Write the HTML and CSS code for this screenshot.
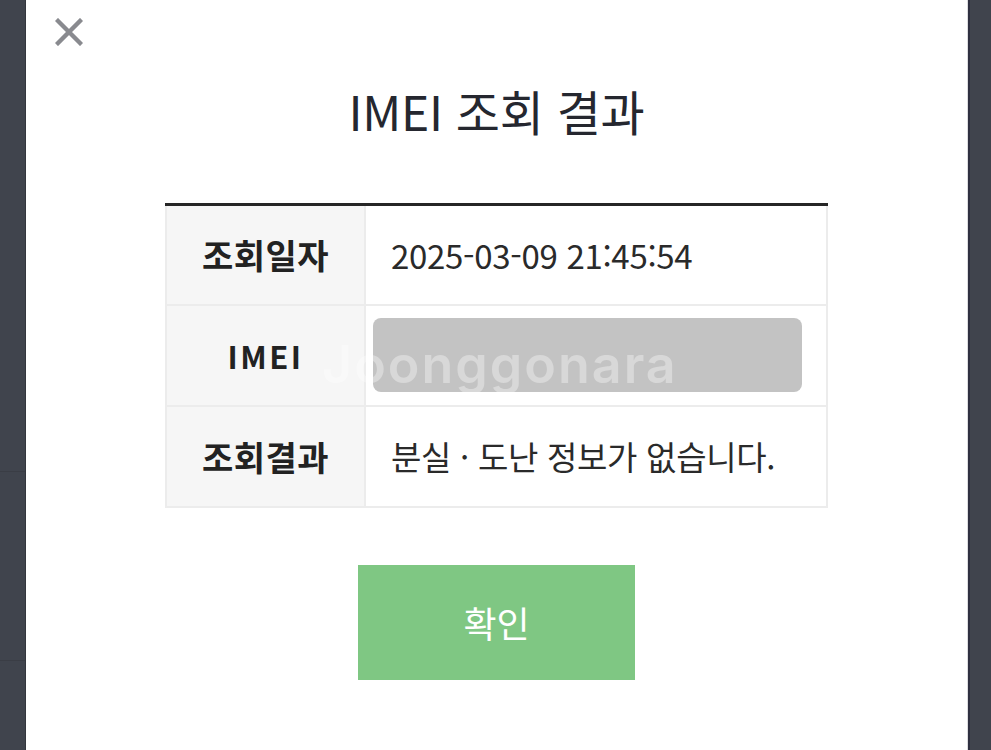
FILE: index.html
```html
<!DOCTYPE html>
<html lang="ko">
<head>
<meta charset="utf-8">
<title>IMEI 조회 결과</title>
<link rel="stylesheet" href="styles.css">
</head>
<body>
<div class="backdrop">
  <div class="bg-line bg-line-left1"></div>
  <div class="bg-line bg-line-left2"></div>
  <div class="modal">
    <div class="modal-head">
      <button class="close" aria-label="닫기">
        <svg width="28" height="28" viewBox="0 0 28 28"><path d="M3 3 L25 25 M25 3 L3 25" stroke="#898a8f" stroke-width="4.4" stroke-linecap="square" fill="none"/></svg>
      </button>
    </div>
    <h1 class="title">IMEI 조회 결과</h1>
    <table class="result">
      <tr>
        <th>조회일자</th>
        <td>2025-03-09 21:45:54</td>
      </tr>
      <tr>
        <th class="latin">IMEI</th>
        <td><div class="blur"></div></td>
      </tr>
      <tr>
        <th>조회결과</th>
        <td>분실 · 도난 정보가 없습니다.</td>
      </tr>
    </table>
    <div class="actions">
      <button class="confirm">확인</button>
    </div>
    <div class="watermark">Joonggonara</div>
  </div>
</div>
</body>
</html>
```
FILE: styles.css
```css
html, body {
  margin: 0;
  padding: 0;
}
body {
  background: #40444d;
  font-family: "Noto Sans CJK KR", "Noto Sans", sans-serif;
  color: #222;
}
.backdrop {
  position: relative;
  width: 991px;
  height: 750px;
  overflow: hidden;
  padding-left: 25px;
  box-sizing: border-box;
}
.bg-line {
  position: absolute;
  left: 0;
  width: 25px;
  height: 1px;
  background: #3a3d45;
}
.bg-line-left1 { top: 471px; }
.bg-line-left2 { top: 660px; }
.modal {
  position: relative;
  width: 941px;
  min-height: 750px;
  background: #fff;
  border-left: 1px solid #33363d;
  border-right: 1px solid #dcdcdf;
  box-shadow: 2px 0 0 #2e3040;
  display: flex;
  flex-direction: column;
  align-items: center;
}
.modal-head {
  align-self: stretch;
  height: 60px;
  padding: 18px 0 0 29px;
  box-sizing: border-box;
}
.close {
  border: 0;
  background: none;
  padding: 0;
  width: 28px;
  height: 28px;
  display: block;
  cursor: pointer;
}
.close svg { display: block; }
.title {
  margin: 18px 0 0;
  font-size: 48px;
  font-weight: 400;
  line-height: 64px;
  color: #25272f;
  letter-spacing: -0.3px;
}
.result {
  margin-top: 61px;
  width: 663px;
  border-collapse: collapse;
  border-top: 3px solid #262626;
  font-size: 33px;
}
.result th,
.result td {
  border: 2px solid #ececec;
  height: 101px;
  padding: 0;
  box-sizing: border-box;
}
.result tr:first-child th,
.result tr:first-child td {
  border-top: 0;
  height: 100px;
}
.result th {
  width: 199px;
  background: #f6f6f6;
  font-weight: 700;
  font-size: 34px;
  color: #222;
  text-align: center;
  letter-spacing: 0.5px;
}
.result th.latin {
  letter-spacing: 2.5px;
  font-size: 31px;
}
.result td {
  text-align: left;
  padding-left: 25px;
  color: #2a2a2a;
  font-weight: 400;
  letter-spacing: -0.3px;
}
.result td .blur {
  width: 429px;
  height: 74px;
  margin-left: -18px;
  background: #c3c3c3;
  border-radius: 8px;
}
.actions {
  margin-top: 57px;
}
.confirm {
  display: block;
  width: 277px;
  height: 115px;
  border: 0;
  background: #7fc783;
  color: #fff;
  font-family: "Noto Sans CJK KR", "Noto Sans", sans-serif;
  font-size: 36px;
  font-weight: 400;
  cursor: pointer;
}
.watermark {
  position: absolute;
  left: 296px;
  top: 333px;
  font-family: "Inter", "Noto Sans", sans-serif;
  font-size: 52px;
  font-weight: 600;
  color: rgba(255, 255, 255, 0.35);
  letter-spacing: 2px;
  pointer-events: none;
}
```
